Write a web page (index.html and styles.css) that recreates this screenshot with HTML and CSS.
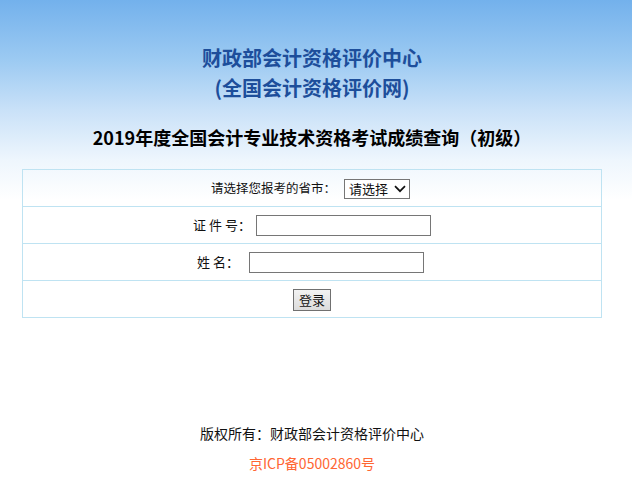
FILE: index.html
```html
<!DOCTYPE html>
<html lang="zh-CN">
<head>
<meta charset="utf-8">
<title>2019年度全国会计专业技术资格考试成绩查询（初级）</title>
<link rel="stylesheet" href="styles.css">
</head>
<body>
<div class="page">
  <header class="head">
    <h1 class="org">财政部会计资格评价中心<br>(全国会计资格评价网)</h1>
    <h2 class="exam">2019年度全国会计专业技术资格考试成绩查询（初级）</h2>
  </header>
  <form class="query-form" onsubmit="return false;">
    <table class="query">
      <tr>
        <td>
          <div class="row row-province">
            <label class="lbl lbl-province" for="province">请选择您报考的省市：</label>
            <span class="select-wrap">
              <select id="province" class="province"><option>请选择</option></select>
              <svg class="chev" width="12" height="8" viewBox="0 0 12 8" aria-hidden="true"><path d="M1 1.2 L6 6.2 L11 1.2" fill="none" stroke="#111" stroke-width="1.7"/></svg>
            </span>
          </div>
        </td>
      </tr>
      <tr>
        <td>
          <div class="row row-id">
            <label class="lbl" for="zjh">证 件 号：</label>
            <input id="zjh" class="field" type="text">
          </div>
        </td>
      </tr>
      <tr>
        <td>
          <div class="row row-name">
            <label class="lbl" for="xm">姓 名：</label>
            <input id="xm" class="field" type="text">
          </div>
        </td>
      </tr>
      <tr>
        <td>
          <div class="row">
            <button class="login" type="submit">登录</button>
          </div>
        </td>
      </tr>
    </table>
  </form>
  <footer class="foot">
    <p class="copy">版权所有：财政部会计资格评价中心</p>
    <p class="icp">京ICP备05002860号</p>
  </footer>
</div>
</body>
</html>
```
FILE: styles.css
```css
html, body {
  margin: 0;
  padding: 0;
}
body {
  background: #ffffff linear-gradient(to bottom, #73b1ec 0px, #9ccaf2 60px, #c9e1f8 110px, #eef6fd 160px, #ffffff 200px) no-repeat;
  background-size: 100% 200px;
  font-family: "Noto Sans CJK SC", "Noto Sans", sans-serif;
  color: #111;
  min-height: 495px;
}
.page {
  width: 624px;
}
.head {
  padding-top: 43px;
  text-align: center;
}
.org {
  margin: 0;
  font-size: 20px;
  line-height: 30px;
  font-weight: bold;
  color: #1d4e9b;
}
.exam {
  margin: 19px 0 0;
  font-size: 18px;
  line-height: 30px;
  font-weight: bold;
  color: #000;
}
.query-form {
  margin: 17px 0 0;
}
.query {
  width: 580px;
  margin: 0 auto;
  border-collapse: collapse;
}
.query td {
  border: 1px solid #bfe3f2;
  height: 36px;
  padding: 0;
}
.row {
  display: flex;
  justify-content: center;
  align-items: center;
  height: 36px;
  font-size: 13px;
}
.row-province { gap: 8px; padding-right: 3px; }
.row-id { gap: 5px; }
.row-name { gap: 10px; padding-right: 3px; }
.lbl {
  white-space: pre;
  color: #111;
  line-height: 20px;
}
.lbl-province {
  font-size: 12.5px;
}
.select-wrap {
  position: relative;
  display: inline-block;
  height: 20px;
  margin-top: 1px;
}
.province {
  appearance: none;
  -webkit-appearance: none;
  box-sizing: border-box;
  width: 66px;
  height: 20px;
  border: 1px solid #767676;
  border-radius: 0;
  background: #fff;
  padding: 0 0 0 4px;
  margin: 0;
  font-family: "Noto Sans CJK SC", sans-serif;
  font-size: 13px;
  line-height: 18px;
  color: #111;
}
.chev {
  position: absolute;
  right: 4px;
  top: 6px;
  pointer-events: none;
}
.field {
  box-sizing: border-box;
  width: 175px;
  height: 21px;
  border: 1px solid #767676;
  border-radius: 0;
  background: #fff;
  margin: 1px 0 0;
  padding: 0 2px;
  font-size: 13px;
}
.login {
  box-sizing: border-box;
  width: 38px;
  height: 22px;
  margin-top: 1px;
  padding: 0;
  border: 1px solid #707070;
  border-radius: 0;
  background: linear-gradient(to bottom, #f2f2f2, #dcdcdc);
  font-family: "Noto Sans CJK SC", sans-serif;
  font-size: 13px;
  line-height: 20px;
  color: #111;
}
.foot {
  margin-top: 100px;
  text-align: center;
  font-size: 14px;
  line-height: 30px;
}
.foot p {
  margin: 0;
}
.copy {
  color: #111;
}
.icp {
  color: #ff6633;
}
```
